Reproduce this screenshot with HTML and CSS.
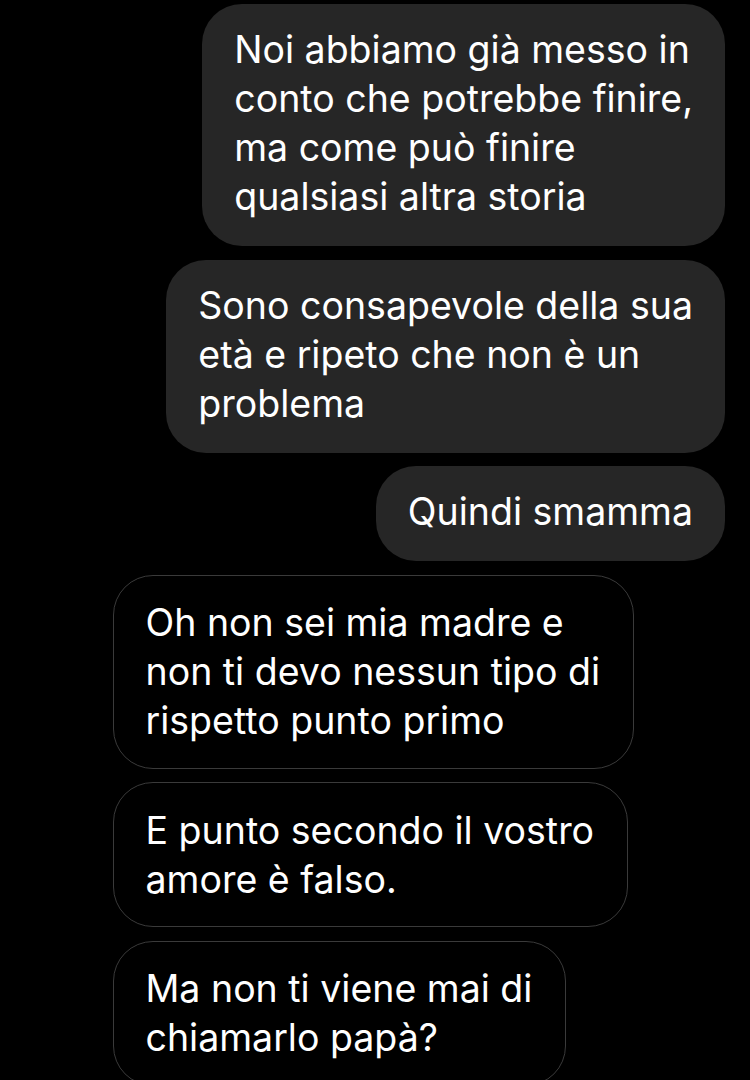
FILE: index.html
```html
<!DOCTYPE html>
<html lang="it">
<head>
<meta charset="utf-8">
<link rel="stylesheet" href="styles.css">
</head>
<body>
<div class="chat">
  <div class="msg sent">Noi abbiamo già messo in<br>conto che potrebbe finire,<br>ma come può finire<br>qualsiasi altra storia</div>
  <div class="msg sent">Sono consapevole della sua<br>età e ripeto che non è un<br>problema</div>
  <div class="msg sent">Quindi smamma</div>
  <div class="msg recv">Oh non sei mia madre e<br>non ti devo nessun tipo di<br>rispetto punto primo</div>
  <div class="msg recv">E punto secondo il vostro<br>amore è falso.</div>
  <div class="msg recv">Ma non ti viene mai di<br>chiamarlo papà?</div>
</div>
</body>
</html>
```

FILE: styles.css
```css
html, body {
  margin: 0;
  padding: 0;
  background: #000;
}
body {
  width: 750px;
  height: 1080px;
  overflow: hidden;
  font-family: Inter, "Liberation Sans", sans-serif;
}
.chat {
  display: flex;
  flex-direction: column;
  gap: 13.5px;
  padding: 4px 25px 0 113px;
}
.msg {
  color: #fff;
  font-size: 37.5px;
  line-height: 49px;
  white-space: nowrap;
  border-radius: 40px;
  box-sizing: border-box;
}
.sent {
  align-self: flex-end;
  background: #262626;
  padding: 21px 32px 25px 32px;
}
.recv {
  align-self: flex-start;
  background: #000;
  border: 1.5px solid #3a3a3a;
  padding: 22.5px 32.5px 22.5px 31.5px;
}
```
